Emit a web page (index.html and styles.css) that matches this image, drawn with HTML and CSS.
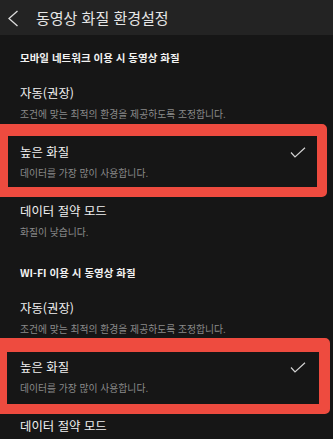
FILE: index.html
```html
<!DOCTYPE html>
<html lang="ko">
<head>
<meta charset="utf-8">
<title>동영상 화질 환경설정</title>
<link rel="stylesheet" href="styles.css">
</head>
<body>
<div class="page">
  <header class="topbar">
    <svg class="back" width="12" height="17" viewBox="0 0 12 17"><path d="M10.5 1 L2 8.5 L10.5 16" fill="none" stroke="#dcdcdc" stroke-width="1.3"/></svg>
    <h1 class="title">동영상 화질 환경설정</h1>
  </header>

  <section class="section">
    <h2 class="sec-head">모바일 네트워크 이용 시 동영상 화질</h2>
    <div class="item">
      <div class="row"><span class="name">자동(권장)</span></div>
      <div class="sub">조건에 맞는 최적의 환경을 제공하도록 조정합니다.</div>
    </div>
    <div class="item">
      <div class="row"><span class="name">높은 화질</span>
        <svg class="check" width="16" height="11" viewBox="0 0 16 11"><path d="M1 5.5 L5 10 L15 0.8" fill="none" stroke="#d2d2d2" stroke-width="1.2"/></svg>
      </div>
      <div class="sub">데이터를 가장 많이 사용합니다.</div>
      <div class="hl hl-a"></div>
    </div>
    <div class="item">
      <div class="row"><span class="name">데이터 절약 모드</span></div>
      <div class="sub">화질이 낮습니다.</div>
    </div>
  </section>

  <section class="section">
    <h2 class="sec-head">WI-FI 이용 시 동영상 화질</h2>
    <div class="item">
      <div class="row"><span class="name">자동(권장)</span></div>
      <div class="sub">조건에 맞는 최적의 환경을 제공하도록 조정합니다.</div>
    </div>
    <div class="item">
      <div class="row"><span class="name">높은 화질</span>
        <svg class="check" width="16" height="11" viewBox="0 0 16 11"><path d="M1 5.5 L5 10 L15 0.8" fill="none" stroke="#d2d2d2" stroke-width="1.2"/></svg>
      </div>
      <div class="sub">데이터를 가장 많이 사용합니다.</div>
      <div class="hl hl-b"></div>
    </div>
    <div class="item item-last">
      <div class="row"><span class="name">데이터 절약 모드</span></div>
    </div>
  </section>
</div>
</body>
</html>
```
FILE: styles.css
```css
* { box-sizing: border-box; }
html, body {
  margin: 0;
  padding: 0;
  background: #161616;
}
body {
  width: 333px;
  height: 439px;
  overflow: hidden;
  font-family: "Noto Sans CJK KR", "Noto Sans", sans-serif;
  color: #eeeeee;
}
.page {
  position: relative;
  width: 333px;
}
.topbar {
  height: 35px;
  background: #232323;
  display: flex;
  align-items: center;
  padding-left: 7px;
}
.back {
  display: block;
  margin-right: 17px;
  margin-top: 1px;
}
.title {
  margin: 0;
  font-size: 15px;
  font-weight: 400;
  color: #e6e6e6;
  line-height: 20px;
}
.section {
  padding-top: 15px;
}
.sec-head {
  margin: 0 0 7px 0;
  padding-left: 20px;
  font-size: 10.5px;
  font-weight: 700;
  line-height: 16px;
  color: #f2f2f2;
}
.item {
  position: relative;
  padding: 10px 27px 11px 20px;
  height: 59px;
}
.item-last {
  height: auto;
  padding-bottom: 0;
}
.row {
  display: flex;
  justify-content: space-between;
  align-items: center;
  height: 20px;
}
.name {
  font-size: 12.4px;
  line-height: 20px;
  color: #f0f0f0;
}
.check {
  display: block;
}
.sub {
  margin-top: 4px;
  font-size: 9.8px;
  line-height: 14px;
  color: #8a8a8a;
}
.hl {
  position: absolute;
  left: 0;
  border-style: solid;
  border-color: #ee4b3f;
  border-radius: 0 5px 5px 0;
  pointer-events: none;
}
.hl-a {
  top: -8px;
  width: 327px;
  height: 73px;
  border-width: 12px 10px 10px 8px;
}
.hl-b {
  top: -9px;
  width: 330px;
  height: 76px;
  border-width: 14px 11px 10px 7px;
}
```
